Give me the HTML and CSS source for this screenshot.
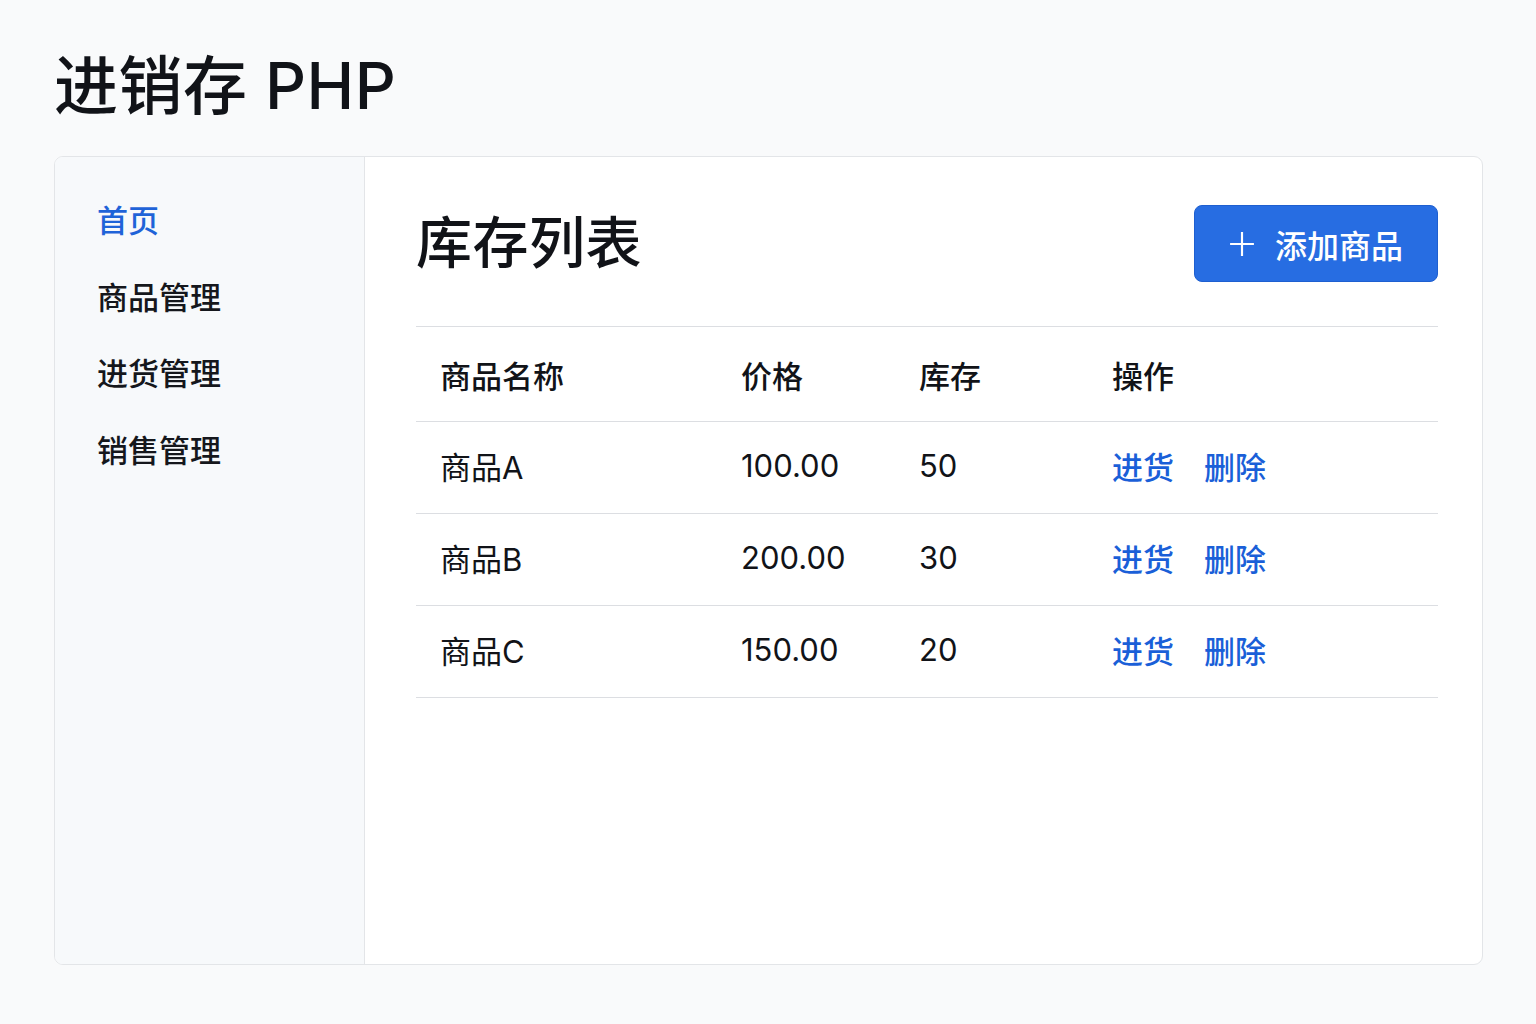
FILE: index.html
```html
<!DOCTYPE html>
<html lang="zh-CN">
<head>
<meta charset="utf-8">
<title>进销存 PHP</title>
<link rel="stylesheet" href="styles.css">
</head>
<body>
<div class="page">
  <h1 class="site-title">进销存 PHP</h1>
  <div class="card">
    <aside class="sidebar">
      <nav class="nav">
        <a class="nav-item active">首页</a>
        <a class="nav-item">商品管理</a>
        <a class="nav-item">进货管理</a>
        <a class="nav-item">销售管理</a>
      </nav>
    </aside>
    <main class="main">
      <div class="main-head">
        <h2 class="main-title">库存列表</h2>
        <button class="btn-primary">
          <svg class="plus" viewBox="0 0 24 24" width="26" height="26"><path d="M12 1v22M1 12h22" stroke="#fff" stroke-width="2" fill="none"/></svg>
          <span>添加商品</span>
        </button>
      </div>
      <table class="table">
        <thead>
          <tr><th class="c1">商品名称</th><th class="c2">价格</th><th class="c3">库存</th><th class="c4">操作</th></tr>
        </thead>
        <tbody>
          <tr><td>商品A</td><td>100.00</td><td>50</td><td><a class="link">进货</a><a class="link">删除</a></td></tr>
          <tr><td>商品B</td><td>200.00</td><td>30</td><td><a class="link">进货</a><a class="link">删除</a></td></tr>
          <tr><td>商品C</td><td>150.00</td><td>20</td><td><a class="link">进货</a><a class="link">删除</a></td></tr>
        </tbody>
      </table>
    </main>
  </div>
</div>
</body>
</html>
```

FILE: styles.css
```css
* { box-sizing: border-box; }
html, body { margin: 0; padding: 0; }
body {
  background: #f9fafb;
  font-family: "Inter", "Noto Sans CJK SC", "Noto Sans", sans-serif;
  color: #111318;
  width: 1536px;
  height: 1024px;
  overflow: hidden;
}
.page { padding: 44px 54px 0 54px; }
.site-title {
  margin: 0;
  font-size: 64px;
  font-weight: 500;
  line-height: 84px;
  letter-spacing: 0.5px;
  height: 112px;
}
.card {
  display: flex;
  width: 1429px;
  height: 809px;
  background: #fff;
  border: 1px solid #e3e5e8;
  border-radius: 9px;
  overflow: hidden;
}
.sidebar {
  width: 310px;
  flex: none;
  background: #f7f9fb;
  border-right: 1px solid #e3e5e8;
  padding: 26px 0 0 42px;
}
.nav { display: flex; flex-direction: column; }
.nav-item {
  font-size: 31px;
  line-height: 50px;
  height: 76.5px;
  display: flex;
  align-items: center;
  font-weight: 500;
  color: #15171c;
}
.nav-item.active { color: #1f63d8; }
.main {
  flex: 1;
  padding: 48px 44px 0 51px;
}
.main-head {
  display: flex;
  justify-content: space-between;
  align-items: center;
  height: 77px;
  margin-bottom: 44px;
}
.main-title {
  margin: 0;
  font-size: 56px;
  font-weight: 500;
  line-height: 77px;
  letter-spacing: 0.5px;
}
.btn-primary {
  width: 244px;
  height: 77px;
  background: #276de2;
  border: 1px solid #1e5fd0;
  border-radius: 8px;
  color: #fff;
  font-family: inherit;
  font-size: 32px;
  font-weight: 500;
  display: flex;
  align-items: center;
  justify-content: center;
  gap: 20px;
  padding: 0 0 0 0;
}
.plus { display: block; }
.table {
  width: 100%;
  border-collapse: collapse;
  font-size: 31px;
}
.table th, .table td {
  text-align: left;
  padding: 0 0 0 24px;
  border-top: 1px solid #dcdee2;
  border-bottom: 1px solid #dcdee2;
}
.table th {
  height: 95px;
  font-weight: 500;
  font-size: 31px;
}
.table td {
  height: 92px;
  font-weight: 400;
  padding-bottom: 4px;
}
.c1 { width: 301px; }
.c2 { width: 178px; }
.c3 { width: 193px; }
.link {
  color: #1a5fd8;
  font-weight: 500;
  margin-right: 30px;
}
```
